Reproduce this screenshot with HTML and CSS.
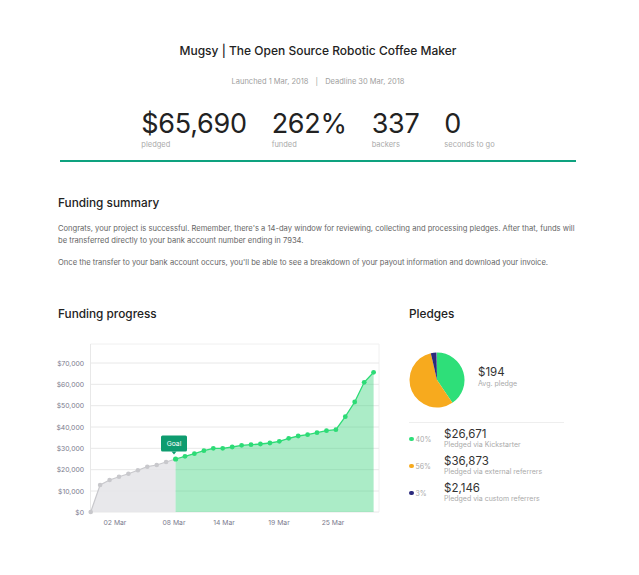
FILE: index.html
```html
<!DOCTYPE html>
<html lang="en">
<head>
  <meta charset="UTF-8">
  <title>Mugsy - Funding summary</title>
  <link rel="stylesheet" href="styles.css">
</head>
<body>
  <div class="page">

    <header class="project">
      <h1>Mugsy | The Open Source Robotic Coffee Maker</h1>
      <p class="dates">Launched 1 Mar, 2018 <span class="sep">|</span> Deadline 30 Mar, 2018</p>

      <div class="stats">
        <div class="stat">
          <div class="stat-num">$65,690</div>
          <div class="stat-label">pledged</div>
        </div>
        <div class="stat">
          <div class="stat-num">262%</div>
          <div class="stat-label">funded</div>
        </div>
        <div class="stat">
          <div class="stat-num">337</div>
          <div class="stat-label">backers</div>
        </div>
        <div class="stat">
          <div class="stat-num">0</div>
          <div class="stat-label">seconds to go</div>
        </div>
      </div>
    </header>

    <section class="summary">
      <h2>Funding summary</h2>
      <p>Congrats, your project is successful. Remember, there's a 14-day window for reviewing, collecting and processing pledges. After that, funds will be transferred directly to your bank account number ending in 7934.</p>
      <p>Once the transfer to your bank account occurs, you'll be able to see a breakdown of your payout information and download your invoice.</p>
    </section>

    <div class="bottom">
      <section class="progress">
        <h2>Funding progress</h2>
        <svg class="chart" width="330" height="200" viewBox="55 335 330 200">
          <!-- plot frame + grid -->
          <g class="grid">
            <path d="M90.5 344 H379 V512" fill="none" stroke="#f0f0f0"/>
            <line x1="90.5" y1="344" x2="90.5" y2="512" stroke="#f0f0f0"/>
            <line x1="90" y1="363" x2="379" y2="363"/>
            <line x1="90" y1="384.3" x2="379" y2="384.3"/>
            <line x1="90" y1="405.7" x2="379" y2="405.7"/>
            <line x1="90" y1="427" x2="379" y2="427"/>
            <line x1="90" y1="448.3" x2="379" y2="448.3"/>
            <line x1="90" y1="469.7" x2="379" y2="469.7"/>
            <line x1="90" y1="491" x2="379" y2="491"/>
            <line x1="90" y1="512" x2="379" y2="512"/>
          </g>
          <g class="ylabels">
            <text x="84" y="365.5">$70,000</text>
            <text x="84" y="386.8">$60,000</text>
            <text x="84" y="408.2">$50,000</text>
            <text x="84" y="429.5">$40,000</text>
            <text x="84" y="450.8">$30,000</text>
            <text x="84" y="472.2">$20,000</text>
            <text x="84" y="493.5">$10,000</text>
            <text x="84" y="514.5">$0</text>
          </g>
          <g class="xlabels">
            <text x="115" y="525">02 Mar</text>
            <text x="174" y="525">08 Mar</text>
            <text x="224" y="525">14 Mar</text>
            <text x="279" y="525">19 Mar</text>
            <text x="333" y="525">25 Mar</text>
          </g>

          <!-- before goal -->
          <path class="area-pre" d="M90.7,512 L90.7,512 100.1,485 109.6,480 119,476.7 128.4,473.7 137.9,470.3 147.3,466.7 156.7,465 166.1,462 175.6,459 175.6,512 Z"/>
          <polyline class="line-pre" points="90.7,512 100.1,485 109.6,480 119,476.7 128.4,473.7 137.9,470.3 147.3,466.7 156.7,465 166.1,462 175.6,459"/>
          <g class="dots-pre">
            <circle cx="90.7" cy="512" r="2.3"/>
            <circle cx="100.1" cy="485" r="2.3"/>
            <circle cx="109.6" cy="480" r="2.3"/>
            <circle cx="119" cy="476.7" r="2.3"/>
            <circle cx="128.4" cy="473.7" r="2.3"/>
            <circle cx="137.9" cy="470.3" r="2.3"/>
            <circle cx="147.3" cy="466.7" r="2.3"/>
            <circle cx="156.7" cy="465" r="2.3"/>
            <circle cx="166.1" cy="462" r="2.3"/>
          </g>

          <!-- after goal -->
          <path class="area-post" d="M175.6,512 L175.6,459 185,456.3 194.4,453.7 203.9,450.7 213.3,448.3 222.7,448.3 232.2,447 241.6,445.3 251,444.7 260.4,444 269.9,443 279.3,441.3 288.7,438.3 298.2,436 307.6,434.7 317,432.7 326.5,430.7 335.9,429.7 345.3,416.7 354.7,402 364.2,382.3 373.6,372.3 373.6,512 Z"/>
          <polyline class="line-post" points="175.6,459 185,456.3 194.4,453.7 203.9,450.7 213.3,448.3 222.7,448.3 232.2,447 241.6,445.3 251,444.7 260.4,444 269.9,443 279.3,441.3 288.7,438.3 298.2,436 307.6,434.7 317,432.7 326.5,430.7 335.9,429.7 345.3,416.7 354.7,402 364.2,382.3 373.6,372.3"/>
          <g class="dots-post">
            <circle cx="175.6" cy="459" r="2.6"/>
            <circle cx="185" cy="456.3" r="2.4"/>
            <circle cx="194.4" cy="453.7" r="2.4"/>
            <circle cx="203.9" cy="450.7" r="2.4"/>
            <circle cx="213.3" cy="448.3" r="2.4"/>
            <circle cx="222.7" cy="448.3" r="2.4"/>
            <circle cx="232.2" cy="447" r="2.4"/>
            <circle cx="241.6" cy="445.3" r="2.4"/>
            <circle cx="251" cy="444.7" r="2.4"/>
            <circle cx="260.4" cy="444" r="2.4"/>
            <circle cx="269.9" cy="443" r="2.4"/>
            <circle cx="279.3" cy="441.3" r="2.4"/>
            <circle cx="288.7" cy="438.3" r="2.4"/>
            <circle cx="298.2" cy="436" r="2.4"/>
            <circle cx="307.6" cy="434.7" r="2.4"/>
            <circle cx="317" cy="432.7" r="2.4"/>
            <circle cx="326.5" cy="430.7" r="2.4"/>
            <circle cx="335.9" cy="429.7" r="2.4"/>
            <circle cx="345.3" cy="416.7" r="2.4"/>
            <circle cx="354.7" cy="402" r="2.4"/>
            <circle cx="364.2" cy="382.3" r="2.4"/>
            <circle cx="373.6" cy="372.3" r="2.4"/>
          </g>

          <!-- goal marker -->
          <g class="goal">
            <rect x="161" y="435.5" width="26" height="16" rx="1.5"/>
            <polygon points="171.5,451.4 176.5,451.4 174,454.5"/>
            <text x="174" y="446">Goal</text>
          </g>
        </svg>
      </section>

      <section class="pledges">
        <h2>Pledges</h2>
        <div class="pie-row">
          <svg class="pie" width="56" height="56" viewBox="0 0 56 56">
            <path d="M28,28 L28,0.5 A27.5,27.5 0 0 1 43.38,50.8 Z" fill="#2edf79"/>
            <path d="M28,28 L43.38,50.8 A27.5,27.5 0 1 1 21.81,1.2 Z" fill="#f7aa1e"/>
            <path d="M28,28 L21.81,1.2 A27.5,27.5 0 0 1 27.52,0.5 Z" fill="#2b2a7c"/>
          </svg>
          <div class="avg">
            <div class="avg-num">$194</div>
            <div class="avg-label">Avg. pledge</div>
          </div>
        </div>

        <ul class="legend">
          <li>
            <span class="pct"><i class="dot green"></i>40%</span>
            <div>
              <div class="amount">$26,671</div>
              <div class="source">Pledged via Kickstarter</div>
            </div>
          </li>
          <li>
            <span class="pct"><i class="dot orange"></i>56%</span>
            <div>
              <div class="amount">$36,873</div>
              <div class="source">Pledged via external referrers</div>
            </div>
          </li>
          <li>
            <span class="pct"><i class="dot navy"></i>3%</span>
            <div>
              <div class="amount">$2,146</div>
              <div class="source">Pledged via custom referrers</div>
            </div>
          </li>
        </ul>
      </section>
    </div>

  </div>
</body>
</html>
```

FILE: styles.css
```css
* {
  margin: 0;
  padding: 0;
  box-sizing: border-box;
}

body {
  font-family: 'Inter', 'Liberation Sans', sans-serif;
  background-color: #fff;
  color: #222;
}

.page {
  width: 520px;
  margin-left: 58px;
}

/* header */

.project {
  padding-top: 42px;
  text-align: center;
}

.project h1 {
  font-size: 12px;
  font-weight: 500;
  line-height: 18px;
  color: #222;
}

.dates {
  margin-top: 17px;
  font-size: 7.5px;
  line-height: 10px;
  color: #a0a0a0;
}

.dates .sep {
  margin: 0 5px;
}

.stats {
  display: flex;
  justify-content: center;
  gap: 25px;
  margin: 22px 2px 0;
  padding-bottom: 10px;
  border-bottom: 2.5px solid #0ea27f;
  text-align: left;
}

.stat-num {
  font-size: 27px;
  line-height: 30px;
  letter-spacing: -0.3px;
  color: #222;
}

.stat-label {
  font-size: 7.5px;
  line-height: 11px;
  color: #aaa;
}

/* summary */

h2 {
  font-size: 11.8px;
  font-weight: 500;
  line-height: 18px;
  color: #222;
}

.summary {
  margin-top: 32px;
}

.summary p {
  font-size: 7.6px;
  line-height: 12px;
  color: #666;
  margin-top: 10px;
}

.summary h2 + p {
  margin-top: 11px;
}

/* charts */

.bottom {
  display: flex;
  margin-top: 36px;
}

.progress {
  width: 351px;
}

.chart {
  display: block;
  margin: 12px 0 0 -3px;
}

.chart .grid line {
  stroke: #e8e8e8;
  stroke-width: 1;
}

.chart text {
  font-family: 'Inter', 'Liberation Sans', sans-serif;
  font-size: 6.8px;
  fill: #7b7b8e;
}

.chart .ylabels text {
  text-anchor: end;
}

.chart .xlabels text {
  text-anchor: middle;
}

.area-pre {
  fill: #e4e4e7;
  opacity: 0.85;
}

.line-pre {
  fill: none;
  stroke: #c8c8cc;
  stroke-width: 1.2;
}

.dots-pre circle {
  fill: #c8c8cc;
}

.area-post {
  fill: #37d27a;
  opacity: 0.42;
}

.line-post {
  fill: none;
  stroke: #2ddb76;
  stroke-width: 1.3;
}

.dots-post circle {
  fill: #2ddb76;
}

.goal rect,
.goal polygon {
  fill: #0e9c6f;
}

.chart .goal text {
  fill: #fff;
  font-size: 6.8px;
  text-anchor: middle;
}

.pledges {
  width: 160px;
}

.pie-row {
  display: flex;
  align-items: center;
  margin-top: 29px;
}

.pie {
  display: block;
}

.avg {
  margin-left: 13px;
  margin-top: -6px;
}

.avg-num {
  font-size: 11.5px;
  line-height: 14px;
  color: #333;
}

.avg-label {
  font-size: 7px;
  line-height: 10px;
  color: #aaa;
}

.legend {
  list-style: none;
  margin-top: 14px;
  border-top: 1px solid #eee;
  padding-top: 5px;
  width: 155px;
}

.legend li {
  display: flex;
  margin-bottom: 5px;
}

.pct {
  width: 35px;
  font-size: 7px;
  line-height: 13px;
  color: #aaa;
  display: flex;
  align-items: center;
}

.dot {
  width: 4.5px;
  height: 4.5px;
  border-radius: 50%;
  margin-right: 2px;
}

.dot.green { background-color: #2edf79; }
.dot.orange { background-color: #f7aa1e; }
.dot.navy { background-color: #2b2a7c; }

.amount {
  font-size: 11.5px;
  line-height: 12px;
  color: #333;
}

.source {
  font-size: 7px;
  line-height: 10px;
  color: #aaa;
}
```
